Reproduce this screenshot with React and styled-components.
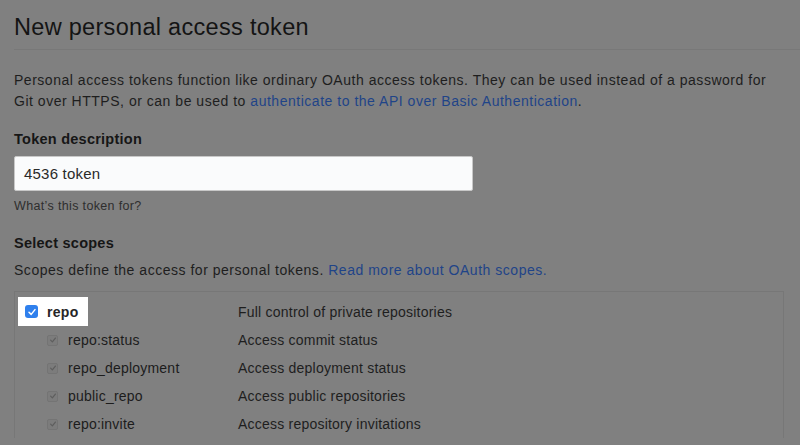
import React from "react";
import styled, { createGlobalStyle } from "styled-components";

const Global = createGlobalStyle`
  html, body { margin: 0; padding: 0; background: #808080; }
  body { font-family: "Liberation Sans", Arial, sans-serif; color: #1c1c1c; }
  * { box-sizing: border-box; }
`;

const Page = styled.div`
  width: 800px;
  height: 445px;
  overflow: hidden;
  padding: 0 14px;
  background: #808080;
`;

const Header = styled.div`
  padding-top: 13px;
  padding-bottom: 8px;
  border-bottom: 1px solid #787878;
  margin-right: -14px;
`;

const Title = styled.h1`
  margin: 0;
  font-size: 23.5px;
  font-weight: 400;
  letter-spacing: 0.3px;
  line-height: 28px;
  color: #141414;
`;

const Lead = styled.p`
  margin: ${(p) => p.$mt}px 0 0;
  font-size: 14px;
  letter-spacing: 0.52px;
  line-height: 21px;
  color: #1e1e1e;
  white-space: nowrap;
`;

const Link = styled.a`
  color: #1f4488;
  text-decoration: none;
`;

const Label = styled.div`
  margin-top: ${(p) => p.$mt}px;
  font-size: 14.5px;
  font-weight: 700;
  letter-spacing: 0.25px;
  line-height: 20px;
  color: #161616;
`;

const Input = styled.div`
  margin-top: 7px;
  width: 459px;
  height: 35px;
  background: #fafbfc;
  border: 1px solid #c8c8c8;
  border-radius: 2px;
  padding: 0 9px;
  display: flex;
  align-items: center;
  font-size: 15px;
  letter-spacing: 0.2px;
  color: #2a2a2a;
`;

const Note = styled.div`
  margin-top: 7px;
  font-size: 12.5px;
  letter-spacing: 0.35px;
  line-height: 16px;
  color: #2e2e2e;
`;

const Scopes = styled.div`
  margin-top: 10px;
  width: 770px;
  border: 1px solid #777777;
  border-bottom: none;
  padding: 5px 0 0 2px;
`;

const Row = styled.div`
  display: grid;
  grid-template-columns: 221px 1fr;
  align-items: center;
  height: ${(p) => (p.$main ? 29 : 28)}px;
`;

const Name = styled.div`
  display: flex;
  align-items: center;
  gap: 10px;
  padding-left: 30px;
  font-size: 14px;
  letter-spacing: 0.22px;
  color: #1c1c1c;
`;

const Highlight = styled.div`
  display: flex;
  align-items: center;
  gap: 9px;
  margin-left: 1px;
  width: 70px;
  height: 29px;
  padding-left: 7px;
  background: #ffffff;
  font-size: 14px;
  font-weight: 700;
  letter-spacing: 0.3px;
  color: #262626;
`;

const Desc = styled.div`
  font-size: 14px;
  letter-spacing: 0.22px;
  color: #1e1e1e;
`;

const BlueBox = styled.span`
  width: 13px;
  height: 13px;
  border-radius: 3px;
  background: #2f80ed;
  display: inline-flex;
  align-items: center;
  justify-content: center;
`;

const GreyBox = styled.span`
  width: 11px;
  height: 11px;
  border-radius: 2px;
  border: 1px solid #747474;
  background: #7c7c7c;
  display: inline-flex;
  align-items: center;
  justify-content: center;
`;

const Check = ({ color, size }) => (
  <svg width={size} height={size} viewBox="0 0 10 10">
    <path d="M2 5.2 L4.2 7.4 L8 2.6" fill="none" stroke={color} strokeWidth="1.5" strokeLinecap="round" strokeLinejoin="round" />
  </svg>
);

const subs = [
  ["repo:status", "Access commit status"],
  ["repo_deployment", "Access deployment status"],
  ["public_repo", "Access public repositories"],
  ["repo:invite", "Access repository invitations"],
];

export default function App() {
  return (
    <Page>
      <Global />
      <Header>
        <Title>New personal access token</Title>
      </Header>
      <Lead $mt={20}>
        Personal access tokens function like ordinary OAuth access tokens. They can be used instead of a password for
        <br />
        Git over HTTPS, or can be used to <Link>authenticate to the API over Basic Authentication</Link>.
      </Lead>
      <Label $mt={17}>Token description</Label>
      <Input>4536 token</Input>
      <Note>What’s this token for?</Note>
      <Label $mt={19}>Select scopes</Label>
      <Lead $mt={7}>
        Scopes define the access for personal tokens. <Link>Read more about OAuth scopes.</Link>
      </Lead>
      <Scopes>
        <Row $main>
          <Highlight>
            <BlueBox>
              <Check color="#fff" size={10} />
            </BlueBox>
            repo
          </Highlight>
          <Desc>Full control of private repositories</Desc>
        </Row>
        {subs.map(([n, d]) => (
          <Row key={n}>
            <Name>
              <GreyBox>
                <Check color="#5e5e5e" size={8} />
              </GreyBox>
              {n}
            </Name>
            <Desc>{d}</Desc>
          </Row>
        ))}
      </Scopes>
    </Page>
  );
}
